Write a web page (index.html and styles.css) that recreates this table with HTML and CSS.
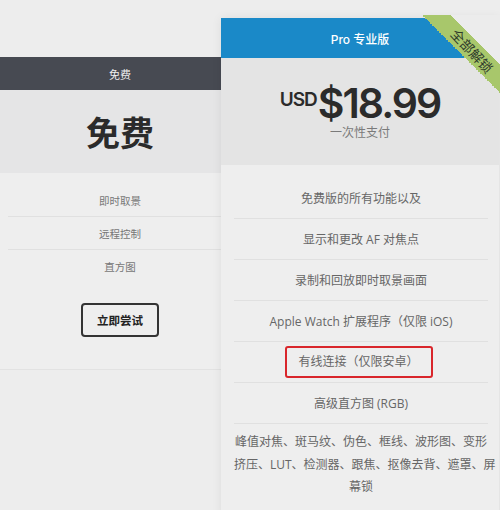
FILE: index.html
```html
<!DOCTYPE html>
<html lang="zh-CN">
<head>
<meta charset="utf-8">
<title>定价</title>
<link rel="stylesheet" href="styles.css">
</head>
<body>
<div class="page">
  <section class="card card-free">
    <div class="card-head head-dark">免费</div>
    <div class="card-price free-price"><span class="free-title">免费</span></div>
    <ul class="features features-free">
      <li>即时取景</li>
      <li>远程控制</li>
      <li>直方图</li>
    </ul>
    <div class="cta"><button class="btn">立即尝试</button></div>
  </section>
  <section class="card card-pro">
    <div class="ribbon"><span>全部解锁</span></div>
    <div class="card-head head-blue">Pro 专业版</div>
    <div class="card-price pro-price">
      <div class="price"><span class="cur">USD</span><span class="amt">$18.99</span></div>
      <div class="note">一次性支付</div>
    </div>
    <ul class="features features-pro">
      <li>免费版的所有功能以及</li>
      <li>显示和更改 AF 对焦点</li>
      <li>录制和回放即时取景画面</li>
      <li>Apple Watch 扩展程序（仅限 iOS)</li>
      <li><span class="hl">有线连接（仅限安卓）</span></li>
      <li>高级直方图 (RGB)</li>
      <li class="multi">峰值对焦、斑马纹、伪色、框线、波形图、变形<br>挤压、LUT、检测器、跟焦、抠像去背、遮罩、屏<br>幕锁</li>
    </ul>
  </section>
</div>
</body>
</html>
```

FILE: styles.css
```css
html, body {
  margin: 0;
  padding: 0;
  height: 510px;
  overflow: hidden;
}

body {
  background: #ededed;
  font-family: "Open Sans", "Noto Sans CJK SC", sans-serif;
  color: #666;
}

.page {
  display: flex;
  align-items: flex-start;
}

.card {
  background: #eeeeee;
  box-sizing: border-box;
}

.card-free {
  width: 240px;
  margin-top: 57px;
  border-bottom: 1px solid #e2e2e2;
  padding-bottom: 32px;
}

.card-head {
  display: flex;
  align-items: center;
  justify-content: center;
}

.head-dark {
  height: 33px;
  background: #474a52;
  color: #eeeeee;
  font-size: 11px;
}

.free-price {
  height: 83px;
  background: #e5e5e6;
  display: flex;
  align-items: center;
  justify-content: center;
}

.free-title {
  font-family: "Noto Sans CJK SC", sans-serif;
  font-size: 34px;
  font-weight: 700;
  color: #2b2b2b;
  line-height: 1;
}

.features {
  list-style: none;
  margin: 0;
}

.features li {
  display: flex;
  align-items: center;
  justify-content: center;
  border-bottom: 1px solid #e0e0e0;
}

.features li:last-child {
  border-bottom: none;
}

.features-free {
  padding: 11px 8px 0;
}

.features-free li {
  height: 32px;
  font-size: 10.5px;
  color: #777;
}

.cta {
  display: flex;
  justify-content: center;
  padding-top: 21px;
}

.btn {
  width: 78px;
  height: 34px;
  box-sizing: border-box;
  border: 2px solid #333;
  border-radius: 4px;
  background: transparent;
  font-family: "Noto Sans CJK SC", sans-serif;
  font-size: 11.5px;
  font-weight: 700;
  color: #222;
  padding: 0;
}

.card-pro {
  width: 278px;
  margin-left: -19px;
  margin-top: 18px;
  position: relative;
  z-index: 1;
  min-height: 500px;
  box-shadow: 0 0 10px rgba(0, 0, 0, 0.07);
}

.head-blue {
  height: 40px;
  background: #1a89c8;
  color: #ffffff;
  font-family: "Inter", "Noto Sans CJK SC", sans-serif;
  font-size: 12px;
  font-weight: 500;
}

.pro-price {
  height: 107px;
  background: #e4e4e4;
  padding-top: 27px;
  box-sizing: border-box;
  text-align: center;
}

.price {
  display: flex;
  justify-content: center;
  align-items: flex-start;
  color: #2b2b2b;
  font-family: "Inter", sans-serif;
  font-weight: 600;
}

.cur {
  font-size: 19px;
  line-height: 20px;
  margin-top: 5px;
  margin-right: 1px;
  letter-spacing: -1px;
}

.amt {
  font-size: 41px;
  line-height: 36px;
  letter-spacing: -2px;
}

.note {
  font-size: 12px;
  line-height: 14px;
  margin-top: 5px;
  color: #7a7a7a;
}

.features-pro {
  padding: 13px 11px 0 13px;
}

.features-pro li {
  height: 40px;
  font-size: 12px;
  color: #666;
}

.features-pro li.multi {
  height: auto;
  display: block;
  text-align: center;
  white-space: nowrap;
  padding-top: 7px;
  line-height: 22.5px;
}

.hl {
  display: inline-block;
  border: 2px solid #d9262b;
  border-radius: 3px;
  padding: 5px 12px 5px 11px;
  line-height: 18px;
  margin-right: 4px;
}

.ribbon {
  position: absolute;
  top: -3px;
  right: -1px;
  width: 78px;
  height: 78px;
  z-index: 2;
  background: linear-gradient(45deg, transparent 50%, #a8c76b 50%, #a8c76b 68%, #ececec 68%);
}

.ribbon span {
  position: absolute;
  left: 50px;
  top: 36px;
  transform: translate(-50%, -50%) rotate(47deg);
  font-family: "Noto Sans CJK SC", sans-serif;
  font-size: 13.5px;
  line-height: 1;
  color: #2f3a2b;
  white-space: nowrap;
}
```
